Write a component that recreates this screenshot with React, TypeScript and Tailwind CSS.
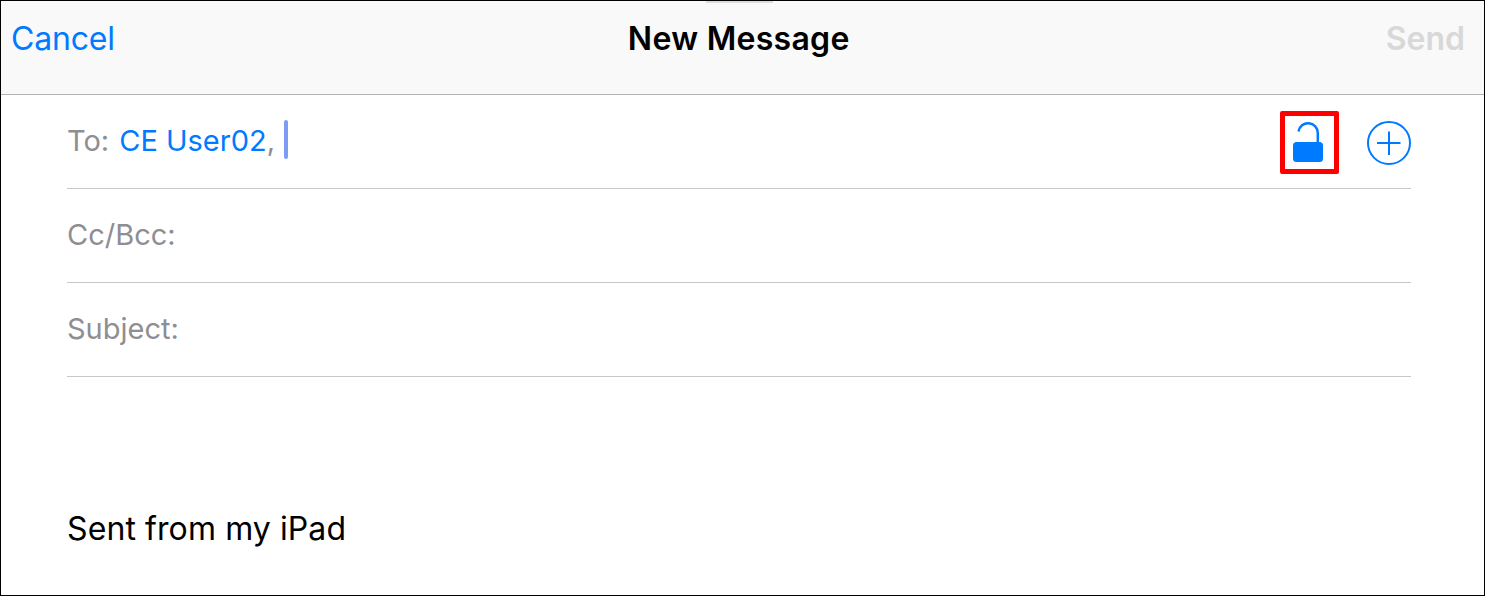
const font = "font-['Inter',sans-serif]";

function LockIcon() {
  return (
    <svg width="49" height="53" viewBox="0 0 49 53" fill="none">
      <path d="M13.500 15.500A9.700 9.700 0 0 1 32.800 17V27" stroke="#007aff" strokeWidth="2.500" />
      <rect x="8" y="26" width="30" height="20" rx="3.500" fill="#007aff" />
    </svg>
  );
}

function PlusIcon() {
  return (
    <svg width="46" height="46" viewBox="0 0 46 46" fill="none" stroke="#007aff" strokeWidth="2">
      <circle cx="23" cy="23" r="21" />
      <path d="M11 23H34.500M23 11.500V35" />
    </svg>
  );
}

function FieldRow({ label }: { label: string }) {
  return (
    <div className="flex h-[94px] items-center border-b border-[#c8c8c8] pb-[2px]">
      <span className="text-[29px] leading-none text-[#8e8e93]">{label}</span>
    </div>
  );
}

export default function App() {
  return (
    <div className={`flex h-[596px] w-[1485px] flex-col overflow-hidden border border-black bg-white ${font}`}>
      <header className="relative flex h-[94px] shrink-0 items-center justify-between border-b border-[#b2b2b2] bg-[#f9f9f9] pb-[17px] pl-[10px] pr-[19px]">
        <span className="text-[32px] leading-none tracking-[-0.2px] text-[#007aff]">Cancel</span>
        <span className="mr-[23px] text-[32px] font-semibold leading-none tracking-[0.3px] text-black">New Message</span>
        <span className="text-[32px] font-semibold leading-none text-[#d8d8d8]">Send</span>
        <div className="absolute left-[705px] top-0 h-[2px] w-[67px] bg-[#dcdcdc]" />
      </header>
      <main className="flex flex-1 flex-col pl-[66px] pr-[73px]">
        <div className="flex h-[94px] items-center border-b border-[#c8c8c8] pb-[2px]">
          <span className="text-[29px] leading-none text-[#8e8e93]">To:</span>
          <span className="ml-[10px] text-[29px] leading-none text-[#007aff]">CE User02</span>
          <span className="text-[29px] leading-none text-[#8e8e93]">,</span>
          <div className="mb-[2px] ml-[9px] h-[39px] w-[4px] rounded-full bg-[#7f9cf5]" />
          <div className="-mr-px mt-[4px] ml-auto flex items-center">
            <div className="h-[63px] w-[59px] rounded-[2px] border-[5px] border-[#ff0000]">
              <LockIcon />
            </div>
            <div className="ml-[27px]">
              <PlusIcon />
            </div>
          </div>
        </div>
        <FieldRow label="Cc/Bcc:" />
        <FieldRow label="Subject:" />
        <p className="mt-[136px] text-[32px] leading-none tracking-[0.1px] text-black">Sent from my iPad</p>
      </main>
    </div>
  );
}
